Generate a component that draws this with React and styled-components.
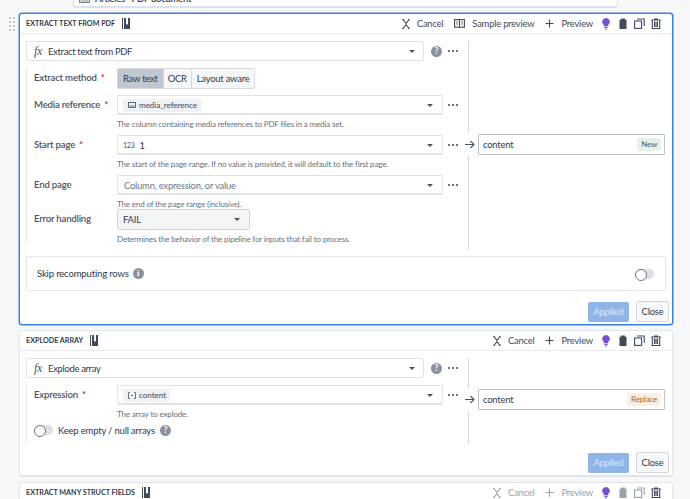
import React from 'react';
import styled, { createGlobalStyle } from 'styled-components';

const GlobalStyle = createGlobalStyle`
  html, body { margin: 0; padding: 0; background: #f6f7f9; }
  body { font-family: Lato, "Liberation Sans", sans-serif; color: #2f3a4a; letter-spacing: -0.2px; }
  * { box-sizing: border-box; }
`;

const Page = styled.div`
  width: 690px;
  height: 499px;
  overflow: hidden;
  padding-left: 19px;
  display: flex;
  flex-direction: column;
`;

const PrevCard = styled.div`
  flex: none;
  width: 545px;
  height: 8px;
  margin-left: 54px;
  margin-bottom: 5px;
  background: #fff;
  border: 1px solid #dfe2e6;
  border-top: 0;
  border-bottom-width: 2px;
  border-radius: 0 0 3px 3px;
  display: flex;
  align-items: center;
  gap: 5px;
  padding-left: 5px;
  overflow: hidden;
  font-size: 9.4px;
  font-weight: 600;
  line-height: 1;
`;

const PrevText = styled.span`
  margin-top: -9px;
  white-space: nowrap;
`;

const PrevIcon = styled.span`
  display: flex;
  margin-top: -9px;
  color: #5a6472;
`;

const Card = styled.section`
  position: relative;
  flex: none;
  width: 654px;
  height: ${p => p.$height}px;
  margin-bottom: 5px;
  background: #fff;
  border: ${p => (p.$active ? '1px solid #3b7fe0' : '1px solid #e1e4e8')};
  border-bottom-width: ${p => (p.$active ? '1px' : '2px')};
  box-shadow: ${p => (p.$active ? '0 0 0 0.5px #3b7fe0' : 'none')};
  border-radius: 3px;
`;

const Grip = styled.div`
  position: absolute;
  left: -11px;
  top: 3px;
  display: grid;
  grid-template-columns: 2px 2px;
  gap: 2px;
  span { width: 2px; height: 2px; background: #c3c8d0; }
`;

const Header = styled.header`
  height: 20px;
  padding: 0 11px 0 6px;
  display: flex;
  align-items: center;
  border-bottom: 1px solid #e8eaed;
`;

const Title = styled.h2`
  margin: 0 7px 0 0;
  font-size: 7.2px;
  font-weight: 700;
  letter-spacing: 0;
  color: #333c4a;
  white-space: nowrap;
`;

const Actions = styled.div`
  margin-left: auto;
  display: flex;
  align-items: center;
  color: ${p => (p.$muted ? '#9aa2ad' : '#3f4a5a')};
`;

const Action = styled.span`
  display: flex;
  align-items: center;
  gap: 7px;
  font-size: 9.4px;
  margin-right: ${p => p.$gap || 12}px;
  white-space: nowrap;
`;

const IconSlot = styled.span`
  display: flex;
  margin-left: ${p => p.$gap || 0}px;
  color: ${p => p.$color || 'inherit'};
`;

const Body = styled.div`
  display: flex;
  padding: 7px 0 0 6px;
  height: ${p => p.$height}px;
`;

const Left = styled.div`
  width: 442px;
  flex: none;
`;

const Right = styled.div`
  flex: none;
  width: 197px;
  border-left: 1px solid #d3d7dd;
  padding-top: ${p => p.$top}px;
  padding-left: 9px;
`;

const FnRow = styled.div`
  display: flex;
  align-items: center;
  height: 20px;
`;

const FnSelect = styled.div`
  width: 398px;
  height: 20px;
  display: flex;
  align-items: center;
  padding: 0 8px 0 7px;
  border: 1px solid #dfe2e6;
  border-radius: 2px;
  font-size: 9.4px;
  letter-spacing: -0.3px;
  color: #2f3a4a;
`;

const Fx = styled.i`
  font-family: "Liberation Serif", serif;
  font-size: 12px;
  margin-right: 6px;
  color: #4a5360;
`;

const Caret = styled.span`
  margin-left: auto;
  width: 0;
  height: 0;
  border-left: 3px solid transparent;
  border-right: 3px solid transparent;
  border-top: 3.5px solid #4a5360;
`;

const Dots = styled.span`
  display: flex;
  gap: 2px;
  margin-left: 5px;
  span { width: 2px; height: 2px; border-radius: 50%; background: #3f4a5a; }
`;

const HelpDot = styled.span`
  width: 11px;
  height: 11px;
  border-radius: 50%;
  background: #8a929e;
  color: #fff;
  font-size: 8.5px;
  font-weight: 700;
  line-height: 11px;
  text-align: center;
  letter-spacing: 0;
  margin-left: ${p => p.$gap || 0}px;
  margin-right: ${p => p.$after || 0}px;
  font-family: ${p => (p.$serif ? '"Liberation Serif", serif' : 'inherit')};
  flex: none;
`;

const Fields = styled.div`
  margin-top: 7px;
  border-left: 1px solid #e5e7ea;
  padding-left: 7px;
  height: ${p => p.$height}px;
`;

const Field = styled.div`
  display: grid;
  grid-template-columns: 83px 1fr;
  margin-bottom: ${p => p.$mb ?? 0}px;
`;

const Label = styled.label`
  font-size: 9.6px;
  font-weight: 600;
  color: #4a5462;
  line-height: 20px;
  white-space: nowrap;
  em { color: #c23030; font-style: normal; margin-left: 4px; }
`;

const InputLine = styled.div`
  display: flex;
  align-items: center;
`;

const Input = styled.div`
  width: 326px;
  height: 20px;
  display: flex;
  align-items: center;
  padding: 1px 9px 0 5px;
  border: 1px solid #dfe2e6;
  border-bottom-width: 2px;
  border-radius: 2px;
  font-size: 9.4px;
`;

const Chip = styled.span`
  display: flex;
  align-items: center;
  gap: 3px;
  height: 13px;
  padding: 0 4px 0 5px;
  background: #f0f1f3;
  border-radius: 2px;
  font-size: 8.2px;
  letter-spacing: -0.1px;
  color: #3f4a5a;
`;

const NumberTag = styled.span`
  font-size: 7px;
  color: #4a5462;
  margin-right: 5px;
`;

const ArrayIcon = () => (
  <svg width="8" height="7" viewBox="0 0 8 7" fill="none" stroke="#4a5462" strokeWidth=".8">
    <path d="M2 .5H.5v6H2M6 .5h1.5v6H6M3 3.5h2" />
  </svg>
);

const Placeholder = styled.span`
  padding-left: 1px;
  color: #6d7683;
  font-size: 9.4px;
`;

const Hint = styled.div`
  grid-column: 2;
  font-size: 8px;
  letter-spacing: -0.15px;
  line-height: 9px;
  margin-top: 5px;
  color: #667080;
  white-space: nowrap;
`;

const Segments = styled.div`
  display: inline-flex;
  height: 21px;
  border: 1px solid #d5d8dd;
  border-radius: 2px;
  width: fit-content;
`;

const Segment = styled.span`
  display: flex;
  align-items: center;
  padding: 0 ${p => p.$pad || 4}px;
  font-size: 9.4px;
  background: ${p => (p.$on ? '#c1c7d0' : '#f6f7f8')};
  border-left: ${p => (p.$first ? '0' : '1px solid #d5d8dd')};
`;

const Select = styled.div`
  width: 133px;
  height: 21px;
  display: flex;
  align-items: center;
  padding: 0 9px 0 5px;
  background: #f4f5f7;
  border: 1px solid #d0d4da;
  border-radius: 2px;
  font-size: 9.4px;
`;

const Output = styled.div`
  width: 187px;
  height: 21px;
  display: flex;
  align-items: center;
  justify-content: space-between;
  padding: 0 3px 0 4px;
  border: 1px solid #bfc3c9;
  border-radius: 1px;
  font-size: 9.4px;
  position: relative;
`;

const Arrow = styled.span`
  position: absolute;
  left: -16px;
  top: -2px;
  width: 14px;
  height: 23px;
  background: #fff;
  display: flex;
  align-items: center;
  justify-content: center;
  color: #4a5462;
`;

const Tag = styled.span`
  height: 13px;
  padding: 0 4px;
  border-radius: 2px;
  font-size: 8px;
  line-height: 13px;
  background: ${p => (p.$warn ? '#fbf0e4' : '#e8f1ec')};
  color: ${p => (p.$warn ? '#a8682c' : '#3f6b55')};
`;

const SkipBox = styled.div`
  width: 640px;
  height: 35px;
  margin: 6px 0 0 6px;
  border: 1px solid #e5e7ea;
  border-radius: 2px;
  padding: 0 11px 0 10px;
  display: flex;
  align-items: center;
  font-size: 9.6px;
`;

const Toggle = styled.span`
  width: 19px;
  height: 10px;
  border-radius: 5px;
  background: #dcdfe3;
  position: relative;
  flex: none;
  margin-left: ${p => (p.$end ? 'auto' : '0')};
  &::before {
    content: '';
    position: absolute;
    left: 0;
    top: 0;
    width: 10px;
    height: 10px;
    border-radius: 50%;
    background: #fff;
    border: 1px solid #6f7782;
  }
`;

const ToggleRow = styled.div`
  display: flex;
  align-items: center;
  gap: 5px;
  margin-top: 4px;
  font-size: 9.5px;
  height: 14px;
`;

const Footer = styled.div`
  display: flex;
  justify-content: flex-end;
  align-items: center;
  gap: 7px;
  padding-right: 3px;
  margin-top: ${p => p.$top}px;
`;

const Applied = styled.span`
  width: 41px;
  height: 20px;
  background: #8fb4e8;
  color: #dbe7f7;
  font-size: 9.4px;
  display: flex;
  align-items: center;
  justify-content: center;
  border-radius: 2px;
`;

const Close = styled.span`
  width: 33px;
  height: 21px;
  background: #f7f8f9;
  border: 1px solid #d3d6db;
  font-size: 9.4px;
  display: flex;
  align-items: center;
  justify-content: center;
  border-radius: 2px;
`;

const Ico = ({ w = 12, h = 12, children }) => (
  <svg width={w} height={h} viewBox={`0 0 ${w} ${h}`} fill="none" stroke="currentColor" strokeWidth="1.1">
    {children}
  </svg>
);

const CancelIcon = () => (
  <Ico w={8} h={10}>
    <path d="M1.3 1 4 4.4 6.7 1M1.3 9 4 5.6 6.7 9M.3.6h1.6M6.1.6h1.6M.3 9.4h1.6M6.1 9.4h1.6" />
  </Ico>
);
const ColumnsIcon = () => (
  <Ico w={11} h={9}>
    <rect x=".6" y=".6" width="9.8" height="7.6" />
    <path d="M5.5.6v7.6" />
    <path d="M7 3h2M7 5h2M2 3h2M2 5h2" strokeWidth=".8" />
  </Ico>
);
const PlusIcon = () => (
  <Ico w={9} h={9}><path d="M4.5.5v8M.5 4.5h8" /></Ico>
);
const BulbIcon = () => (
  <svg width="8" height="12" viewBox="0 0 8 12">
    <path d="M4 0a3.8 3.8 0 0 1 2.3 6.8L6 8.2H2L1.7 6.8A3.8 3.8 0 0 1 4 0Z" fill="#7250d8" />
    <path d="M2.2 9.4h3.6M3 11h2" stroke="#7250d8" strokeWidth="1" />
  </svg>
);
const ClipIcon = () => (
  <svg width="8" height="11" viewBox="0 0 8 11">
    <path d="M.5 1.8h1.6V.6h3.8v1.2h1.6V11H.5Z" fill="currentColor" />
  </svg>
);
const CopyIcon = () => (
  <Ico w={11} h={11}>
    <rect x=".6" y="3" width="7" height="7.4" />
    <path d="M3 1h7.2v7" />
  </Ico>
);
const TrashIcon = () => (
  <Ico w={10} h={11}>
    <path d="M.2 2h9.6M3 1h4M1.3 2v8.5h7.4V2M3.5 3.5v5.5M5 3.5v5.5M6.5 3.5v5.5" />
  </Ico>
);
const LibraryIcon = () => (
  <svg width="8" height="11" viewBox="0 0 8 11">
    <path d="M0 0h1v11H0ZM2 0h2v6l1 .7L6 6V0h2v11H2Z" fill="#3f4a5a" />
  </svg>
);
const ImageIcon = ({ w = 8, h = 6 }) => (
  <Ico w={w} h={h}>
    <rect x=".5" y=".5" width={w - 1} height={h - 1} strokeWidth=".8" />
    <path d={`M1.5 ${h - 2}h${w - 3}`} strokeWidth=".8" />
  </Ico>
);

const DotsIcon = () => (
  <Dots><span /><span /><span /></Dots>
);

const Grips = () => (
  <Grip>{Array.from({ length: 8 }, (_, i) => <span key={i} />)}</Grip>
);

const ArrowIcon = () => (
  <Ico w={10} h={9}><path d="M0 4.5h9M5.5 1l3.5 3.5L5.5 8" /></Ico>
);

const HeadActions = ({ sample, muted }) => (
  <Actions $muted={muted}>
    <Action $gap={11}><CancelIcon />Cancel</Action>
    {sample && <Action $gap={11}><ColumnsIcon />Sample preview</Action>}
    <Action $gap={9}><PlusIcon />Preview</Action>
    <IconSlot $color="#7250d8"><BulbIcon /></IconSlot>
    <IconSlot $gap={9}><ClipIcon /></IconSlot>
    <IconSlot $gap={7}><CopyIcon /></IconSlot>
    <IconSlot $gap={6} $color="#3f4a5a"><TrashIcon /></IconSlot>
  </Actions>
);

export default function App() {
  return (
    <Page>
      <GlobalStyle />
      <PrevCard>
        <PrevIcon><ImageIcon w={11} h={9} /></PrevIcon>
        <PrevText>Articles · PDF document</PrevText>
      </PrevCard>

      <Card $active $height={312}>
        <Grips />
        <Header>
          <Title>EXTRACT TEXT FROM PDF</Title>
          <LibraryIcon />
          <HeadActions sample />
        </Header>
        <Body $height={216}>
          <Left>
            <FnRow>
              <FnSelect><Fx>fx</Fx>Extract text from PDF<Caret /></FnSelect>
              <HelpDot $gap={7} $after={1}>?</HelpDot>
              <DotsIcon />
            </FnRow>
            <Fields $height={175}>
              <Field $mb={6}>
                <Label>Extract method<em>*</em></Label>
                <Segments>
                  <Segment $on $first $pad={5}>Raw text</Segment>
                  <Segment>OCR</Segment>
                  <Segment $pad={5}>Layout aware</Segment>
                </Segments>
              </Field>
              <Field $mb={6}>
                <Label>Media reference<em>*</em></Label>
                <InputLine>
                  <Input>
                    <Chip><ImageIcon />media_reference</Chip>
                    <Caret />
                  </Input>
                  <DotsIcon />
                </InputLine>
                <Hint>The column containing media references to PDF files in a media set.</Hint>
              </Field>
              <Field $mb={6}>
                <Label>Start page<em>*</em></Label>
                <InputLine>
                  <Input>
                    <NumberTag>123</NumberTag>
                    1
                    <Caret />
                  </Input>
                  <DotsIcon />
                </InputLine>
                <Hint>The start of the page range. If no value is provided, it will default to the first page.</Hint>
              </Field>
              <Field $mb={0}>
                <Label>End page</Label>
                <InputLine>
                  <Input>
                    <Placeholder>Column, expression, or value</Placeholder>
                    <Caret />
                  </Input>
                  <DotsIcon />
                </InputLine>
                <Hint>The end of the page range (inclusive).</Hint>
              </Field>
              <Field>
                <Label>Error handling</Label>
                <Select>FAIL<Caret /></Select>
                <Hint>Determines the behavior of the pipeline for inputs that fail to process.</Hint>
              </Field>
            </Fields>
          </Left>
          <Right $top={93}>
            <Output>
              <Arrow><ArrowIcon /></Arrow>
              content
              <Tag>New</Tag>
            </Output>
          </Right>
        </Body>
        <SkipBox>
          Skip recomputing rows
          <HelpDot $gap={4} $serif>i</HelpDot>
          <Toggle $end />
        </SkipBox>
        <Footer $top={10}>
          <Applied>Applied</Applied>
          <Close>Close</Close>
        </Footer>
      </Card>

      <Card $height={147}>
        <Header>
          <Title>EXPLODE ARRAY</Title>
          <LibraryIcon />
          <HeadActions />
        </Header>
        <Body $height={92}>
          <Left>
            <FnRow>
              <FnSelect><Fx>fx</Fx>Explode array<Caret /></FnSelect>
              <HelpDot $gap={7} $after={1}>?</HelpDot>
              <DotsIcon />
            </FnRow>
            <Fields $height={58}>
              <Field>
                <Label>Expression<em>*</em></Label>
                <InputLine>
                  <Input>
                    <Chip><ArrayIcon />content</Chip>
                    <Caret />
                  </Input>
                  <DotsIcon />
                </InputLine>
                <Hint>The array to explode.</Hint>
              </Field>
              <ToggleRow>
                <Toggle />
                Keep empty / null arrays
                <HelpDot>?</HelpDot>
              </ToggleRow>
            </Fields>
          </Left>
          <Right $top={31}>
            <Output>
              <Arrow><ArrowIcon /></Arrow>
              content
              <Tag $warn>Replace</Tag>
            </Output>
          </Right>
        </Body>
        <Footer $top={9}>
          <Applied>Applied</Applied>
          <Close>Close</Close>
        </Footer>
      </Card>

      <Card $height={40}>
        <Header>
          <Title>EXTRACT MANY STRUCT FIELDS</Title>
          <LibraryIcon />
          <HeadActions muted />
        </Header>
      </Card>
    </Page>
  );
}
